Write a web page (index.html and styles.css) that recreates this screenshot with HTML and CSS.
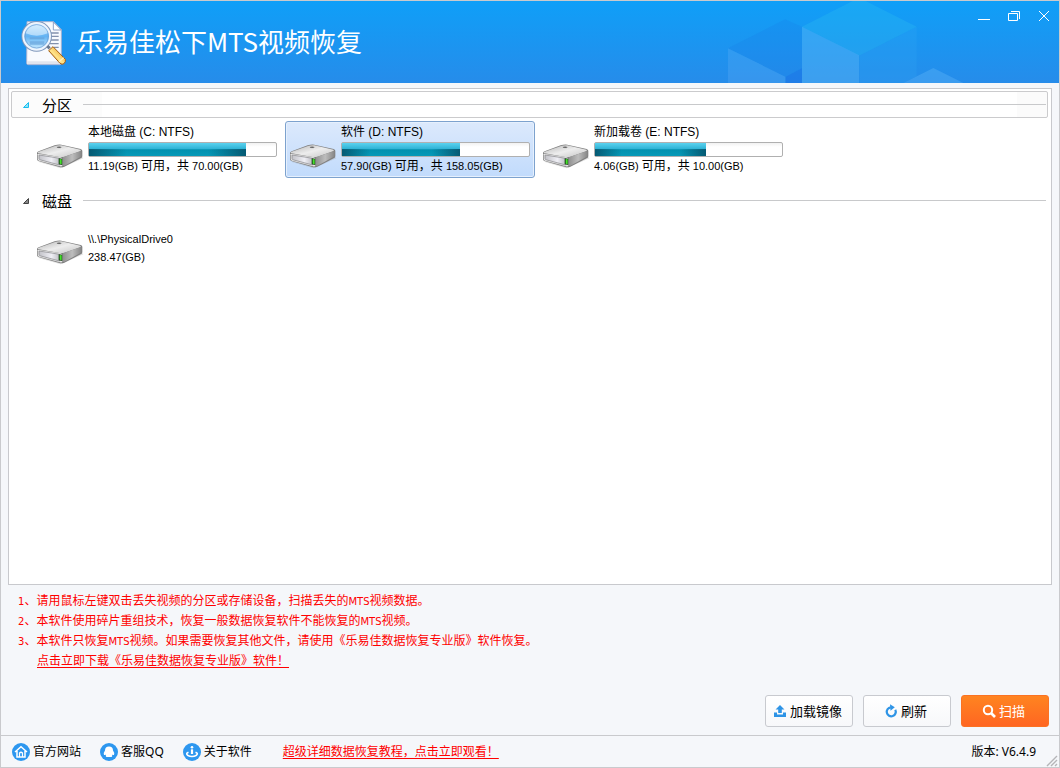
FILE: index.html
```
<!DOCTYPE html>
<html lang="zh-CN">
<head>
<meta charset="utf-8">
<title>乐易佳松下MTS视频恢复</title>
<link rel="stylesheet" href="styles.css">
</head>
<body>
<svg class="defs" width="0" height="0" aria-hidden="true">
  <defs>
    <linearGradient id="top" x1="0" y1="0" x2="1" y2="1"><stop offset="0" stop-color="#b4b4b4"/><stop offset=".5" stop-color="#ededed"/><stop offset="1" stop-color="#c6c6c6"/></linearGradient>
    <linearGradient id="side" x1="0" y1="0" x2="1" y2="0"><stop offset="0" stop-color="#909090"/><stop offset=".5" stop-color="#bdbdbd"/><stop offset="1" stop-color="#858585"/></linearGradient>
    <linearGradient id="front" x1="0" y1="0" x2="1" y2="0"><stop offset="0" stop-color="#c2c2c8"/><stop offset=".6" stop-color="#efeff5"/><stop offset="1" stop-color="#bcbcc2"/></linearGradient>
    <symbol id="drive" viewBox="18 18 144 90">
      <path d="M24 86 L92 106 L160 76 L150 66 Z" fill="#999" opacity=".3"/>
      <path d="M21 60 Q21 57 26 55 L74 37 Q84 34 94 35 L152 48 Q158 50 157 55 V70 Q157 74 152 76 L103 101 Q96 104 88 102 L25 84 Q21 82 21 78 Z" fill="#808080"/>
      <path d="M24 57 L75 39 Q84 36 94 37 L151 50 Q155 52 150 55 L103 71 Q96 73 88 72 L26 61 Q21 59 24 57Z" fill="url(#top)"/>
      <path d="M99 73 L153 54 Q156 54 155 58 V70 L102 99 Q98 99 98 95 Z" fill="url(#side)"/>
      <path d="M24 62 L92 73 Q97 75 97 79 V98 Q96 101 90 100 L27 83 Q23 81 23 77 V64 Z" fill="#e5e5e5"/>
      <path d="M27 66 L89 76 V96 L29 80 Q27 79 27 76 Z" fill="url(#front)" stroke="#85858a" stroke-width="2"/>
      <path d="M86 76 L97 77 V96 L86 94 Z" fill="#173b16"/>
      <path d="M89 78 L95 79 V94 L89 92 Z" fill="#45e22b"/>
      <path d="M80 42 Q88 38 96 43 Q92 48 83 46 Z" fill="#666"/>
      <path d="M82 46 Q90 48 96 44" fill="none" stroke="#fff" stroke-width="2"/>
    </symbol>
  </defs>
</svg>
<div class="window">
  <header class="header">
    <svg class="header-art" viewBox="0 3 1077 246" aria-hidden="true">
      <path d="M84 145 L255 58 L306 80 V205 L257 230 Z" fill="#1b78e6" opacity=".2"/>
      <path d="M84 145 L256 230 V249 H84Z" fill="#6ab4f6" opacity=".25"/>
      <path d="M257 230 L306 205 V249 H257Z" fill="#1767e4" opacity=".4"/>
      <path d="M306 80 L458 3 H497 L650 80 L478 167Z" fill="#30c3f2" opacity=".27"/>
      <path d="M306 80 L477 166 V249 H306Z" fill="#64bdf6" opacity=".38"/>
      <path d="M478 167 L650 80 V229 L610 249 H478Z" fill="#32a7f2" opacity=".24"/>
      <path d="M610 249 L700 204 L790 249Z" fill="#5cb5f7" opacity=".4"/>
    </svg>
    <svg class="logo" viewBox="15 30 141 141" aria-hidden="true">
      <defs>
        <linearGradient id="glass" x1="0" y1="0" x2="0" y2="1"><stop offset="0" stop-color="#c9e8ff"/><stop offset=".5" stop-color="#62b3f3"/><stop offset="1" stop-color="#d5f1ff"/></linearGradient>
        <linearGradient id="gold" x1="0" y1="1" x2="1" y2="0"><stop offset="0" stop-color="#c76c05"/><stop offset=".45" stop-color="#ffe48b"/><stop offset="1" stop-color="#e28b0c"/></linearGradient>
      </defs>
      <path d="M36 35 H116 L139 59 V159 Q139 164 134 164 H39 Q35 164 35 160Z" fill="#f8fafe" stroke="#a5b2d2" stroke-width="3"/>
      <path d="M37 154 H138 V162 H37Z" fill="#e0e4ee"/>
      <path d="M115 36 V60 H139Z" fill="#fff" stroke="#8da2c8" stroke-width="3"/>
      <path d="M105 69 H131 M105 79 H131 M105 90 H131 M105 101 H131 M115 112 H131" stroke="#8391ad" stroke-width="4"/>
      <circle cx="65" cy="79" r="43" fill="url(#glass)" stroke="#7f97ba" stroke-width="6"/>
      <circle cx="65" cy="79" r="40" fill="none" stroke="#eef4fd" stroke-width="6"/>
      <circle cx="65" cy="79" r="35" fill="none" stroke="#6b98cf" stroke-width="2"/>
      <path d="M32 70 Q65 84 98 70 Q94 47 65 45 Q37 48 32 70Z" fill="#edf7ff" opacity=".55"/>
      <path d="M44 82 H88 V88 H44Z M44 94 H88 V104 H44Z" fill="#629fd7" opacity=".6"/>
      <path d="M97 108 L104 115" stroke="#68778e" stroke-width="9"/>
      <path d="M101 122 L114 110 L151 148 Q153 155 147 161 Q141 165 135 160Z" fill="url(#gold)" stroke="#a65d10" stroke-width="3"/>
      <path d="M132 155 L146 143" stroke="#fff2bd" stroke-width="4"/>
    </svg>
    <h1 class="title">乐易佳松下MTS视频恢复</h1>
    <div class="controls">
      <button class="control" aria-label="最小化"><svg viewBox="0 0 12 12"><path d="M0 9.5H12"/></svg></button>
      <button class="control" aria-label="还原"><svg viewBox="0 0 12 12"><path d="M.5 3.5H9.500V10.500H.5Z M3 1.500H11.500V9"/></svg></button>
      <button class="control" aria-label="关闭"><svg viewBox="0 0 12 12"><path d="M1 1L11 11M11 1L1 11"/></svg></button>
    </div>
  </header>

  <main class="main">
    <section class="panel">
      <h2 class="group group-active"><svg class="arrow" viewBox="0 0 8 8"><path d="M6.500 1.500V6.500H1.500Z"/></svg>分区</h2>
      <div class="tiles">
        <article class="tile">
          <svg class="drive"><use href="#drive"/></svg>
          <div class="info">
            <div class="name">本地磁盘 (C: NTFS)</div>
            <div class="bar"><div class="fill" style="width:84%"></div></div>
            <div class="detail">11.19(GB) <span class="zh">可用，共</span> 70.00(GB)</div>
          </div>
        </article>
        <article class="tile tile-selected">
          <svg class="drive"><use href="#drive"/></svg>
          <div class="info">
            <div class="name">软件 (D: NTFS)</div>
            <div class="bar"><div class="fill" style="width:63%"></div></div>
            <div class="detail">57.90(GB) <span class="zh">可用，共</span> 158.05(GB)</div>
          </div>
        </article>
        <article class="tile">
          <svg class="drive"><use href="#drive"/></svg>
          <div class="info">
            <div class="name">新加载卷 (E: NTFS)</div>
            <div class="bar"><div class="fill" style="width:59.4%"></div></div>
            <div class="detail">4.06(GB) <span class="zh">可用，共</span> 10.00(GB)</div>
          </div>
        </article>
      </div>
      <h2 class="group group-next"><svg class="arrow" viewBox="0 0 8 8"><path d="M6.500 1.500V6.500H1.500Z"/></svg>磁盘</h2>
      <div class="tiles">
        <article class="tile">
          <svg class="drive"><use href="#drive"/></svg>
          <div class="info info-disk">
            <div class="detail">\\.\PhysicalDrive0</div>
            <div class="detail">238.47(GB)</div>
          </div>
        </article>
      </div>
    </section>

    <div class="tips">
      <p><span class="en">1</span>、请用鼠标左键双击丢失视频的分区或存储设备，扫描丢失的<span class="en">MTS</span>视频数据。</p>
      <p><span class="en">2</span>、本软件使用碎片重组技术，恢复一般数据恢复软件不能恢复的<span class="en">MTS</span>视频。</p>
      <p><span class="en">3</span>、本软件只恢复<span class="en">MTS</span>视频。如果需要恢复其他文件，请使用《乐易佳数据恢复专业版》软件恢复。</p>
      <p class="tip-link"><a class="red-link" href="#download">点击立即下载《乐易佳数据恢复专业版》软件！</a></p>
    </div>
    <div class="actions">
      <button class="button"><svg viewBox="0 0 14 14" fill="#2e94e6"><path d="M7 1L11.500 5.500H8.800V9H5.200V5.500H2.500Z"/><path d="M1 8.500H4V10.500H10V8.500H13V13H1Z"/></svg>加载镜像</button>
      <button class="button"><svg viewBox="0 0 14 14"><path d="M11.300 5.800A4.500 4.500 0 1 1 6.800 3.300" fill="none" stroke="#2e94e6" stroke-width="2.200"/><path d="M6 .2L10.800 3.300L6.500 6.800Z" fill="#2e94e6"/></svg>刷新</button>
      <button class="button button-primary"><svg viewBox="0 0 14 14" fill="none" stroke="#fff" stroke-width="2"><circle cx="6" cy="6" r="4.200"/><path d="M9 9L13 13" stroke-width="2.600"/></svg>扫描</button>
    </div>
  </main>

  <footer class="status">
    <nav class="nav">
      <a class="nav-link" href="#site"><svg viewBox="0 0 18 18"><circle cx="9" cy="9" r="9" fill="#2d97ef"/><path d="M3 9L9 3.800L15 9M5 8V14H13V8" fill="none" stroke="#fff" stroke-width="1.500"/><path d="M7.500 14V10Q9 8.500 10.500 10V14" fill="none" stroke="#fff" stroke-width="1.200"/></svg>官方网站</a>
      <a class="nav-link" href="#qq"><svg viewBox="0 0 18 18"><circle cx="9" cy="9" r="9" fill="#2d97ef"/><path d="M9 3.500Q13 3.700 13 7.500Q14.700 9.500 14 12Q13 12 12.700 11.500L12 12.800Q13 14.200 9 14Q5 14.200 6 12.800L5.300 11.500Q5 12 4 12Q3.300 9.500 5 7.500Q5 3.700 9 3.500Z" fill="#fff"/></svg>客服QQ</a>
      <a class="nav-link" href="#about"><svg viewBox="0 0 18 18"><circle cx="9" cy="9" r="9" fill="#2d97ef"/><circle cx="9" cy="4.200" r="1.300" fill="#fff"/><path d="M9 6.300V11" stroke="#fff" stroke-width="2.200"/><path d="M5.500 9.200Q2.500 10.500 4.500 12.200Q9 14.800 13.500 12.200Q15.500 10.500 12.500 9.200" fill="none" stroke="#fff" stroke-width="1.600"/></svg>关于软件</a>
    </nav>
    <a class="red-link" href="#tutorial">超级详细数据恢复教程，点击立即观看！</a>
    <span class="version">版本: V6.4.9</span>
    <svg class="grip" viewBox="0 0 12 12" aria-hidden="true"><path d="M1 11L11 1M5 11L11 5M9 11L11 9" stroke="#b5b5b8" stroke-width="1.400"/></svg>
  </footer>
</div>
</body>
</html>
```
FILE: styles.css
```
* { box-sizing: border-box; }
body, h1, h2, p { margin: 0; }
body { font: 12px/18px "Liberation Sans", "Noto Sans CJK SC", sans-serif; color: #000; }
button { font-family: "Noto Sans", "Noto Sans CJK SC", sans-serif; cursor: pointer; }
svg { display: block; flex: none; }
.defs { position: absolute; }

.window {
  display: flex;
  flex-direction: column;
  min-height: 100vh;
  border: 1px solid #c9cacd;
  background: #f5f7fa;
}

.header {
  position: relative;
  display: flex;
  align-items: center;
  gap: 10px;
  height: 82px;
  padding-left: 19px;
  background: linear-gradient(#0f9ff8, #268cea);
  color: #fff;
}
.header-art { position: absolute; right: 0; top: 0; width: 359px; height: 82px; }
.logo { width: 47px; height: 47px; margin-top: 3px; }
.title { font: 400 26px/38px "Noto Sans CJK SC", sans-serif; padding-bottom: 2px; white-space: nowrap; }
.controls { position: relative; display: flex; align-self: flex-start; margin-left: auto; }
.control {
  display: flex;
  align-items: center;
  justify-content: center;
  width: 30px;
  height: 30px;
  padding: 0;
  border: 0;
  background: none;
}
.control svg { width: 12px; height: 12px; fill: none; stroke: #fff; stroke-width: 1; }

.main { display: flex; flex: 1; flex-direction: column; padding: 5px 7px 8px; }
.panel { flex: 1; padding: 2px 3px 2px 2px; border: 1px solid #c8c9cd; background: #fff; }

.group {
  display: flex;
  align-items: center;
  height: 27px;
  padding: 0 1px 0 10px;
  border: 1px solid transparent;
  border-radius: 2px;
  font: 400 15px/22px "Noto Sans CJK SC", sans-serif;
}
.group::after { content: ""; flex: 1; height: 1px; margin-left: 11px; background: #c8c9cb; }
.group-active { border-color: #cbcbcd; background: linear-gradient(90deg, #fcfcfc 0 90px, #fff 90px calc(100% - 30px), #fbfbfb calc(100% - 30px)); }
.group-next { margin-top: 9px; }
.arrow { width: 8px; height: 8px; margin-right: 12px; fill: #888; stroke: #444; stroke-width: 1; }
.group-active .arrow { fill: #8de5fb; stroke: #18bdee; }

.tiles { display: flex; flex-wrap: wrap; gap: 3px; padding: 3px 0 0 21px; }
.tile {
  display: flex;
  width: 250px;
  height: 57px;
  padding: 0 4px 0 3px;
  border: 1px solid transparent;
  border-radius: 3px;
}
.tile-selected { border-color: #7da2ce; background: linear-gradient(#dce9fc, #c1dbfc); box-shadow: inset 0 0 0 1px #e6f0fd; }
.drive { width: 48px; height: 30px; margin: 17px 4px 0 0; }
.info { flex: 1; }
.info-disk { padding-top: 12px; }
.name { line-height: 20px; }
.bar {
  height: 15px;
  border: 1px solid #b0b0b0;
  border-radius: 2px;
  background: linear-gradient(#f1f1f1, #fff 4px);
}
.fill {
  height: 100%;
  background:
    linear-gradient(90deg, #064b63cc, transparent 24%, transparent 76%, #064b63cc) 0 100% / 100% 7px no-repeat,
    linear-gradient(#5bd2ef, #2fb3d5 45%, #0290ae 52%, #069ab8);
}
.detail { font-size: 11px; line-height: 18px; white-space: nowrap; }
.zh { font-size: 12px; }

.tips { padding: 6px 9px 0 10px; color: #f00; line-height: 20px; }
.en { font: 10px "DejaVu Sans", sans-serif; }
.tip-link { padding-left: 19px; }
.red-link { color: #f00; text-decoration: underline; text-underline-offset: 2px; }

.actions { display: flex; justify-content: flex-end; gap: 10px; padding: 24px 3px 0 0; }
.button {
  display: flex;
  align-items: center;
  justify-content: center;
  gap: 3px;
  width: 88px;
  height: 32px;
  padding: 0 3px 2px 0;
  border: 1px solid #c8cacf;
  border-radius: 3px;
  background: linear-gradient(#fff, #f7f8fa);
  color: #000;
  font-size: 13px;
}
.button svg { width: 14px; height: 14px; margin-top: 2px; }
.button-primary { border-color: #fb7222; background: linear-gradient(#ff8420, #ff6622); color: #fff; }

.status {
  display: flex;
  align-items: center;
  height: 32px;
  padding: 0 1px 0 11px;
  border-top: 1px solid #c9cacd;
}
.nav { display: flex; gap: 19px; margin-right: 31px; }
.nav-link { display: flex; align-items: center; gap: 3px; color: #000; text-decoration: none; }
.nav-link, .version { font-family: "Noto Sans", "Noto Sans CJK SC", sans-serif; }
.nav-link svg { width: 18px; height: 18px; }
.version { margin-left: auto; }
.grip { align-self: flex-end; width: 12px; height: 12px; margin-left: 10px; }
```
